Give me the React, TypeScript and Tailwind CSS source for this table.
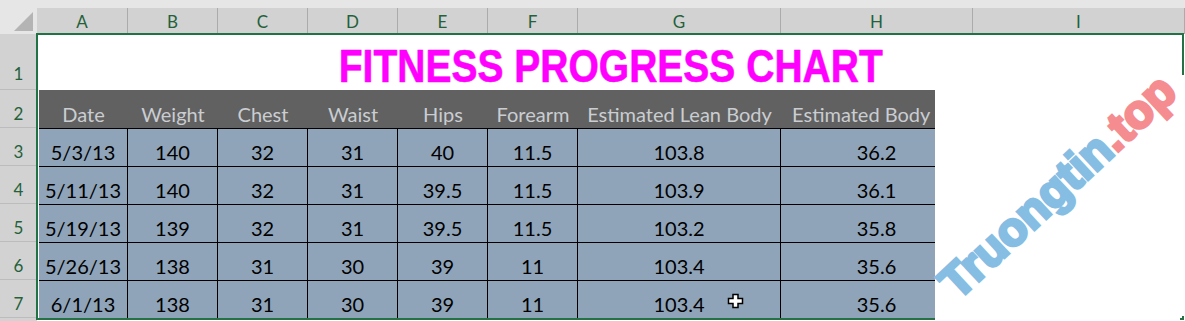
import React from 'react';

const cols = [
  { key: 'A', hdr: 'w-[91px]', cell: 'w-[89px]' },
  { key: 'B', hdr: 'w-[90px]', cell: 'w-[90px]' },
  { key: 'C', hdr: 'w-[90px]', cell: 'w-[90px]' },
  { key: 'D', hdr: 'w-[90px]', cell: 'w-[90px]' },
  { key: 'E', hdr: 'w-[90px]', cell: 'w-[90px]' },
  { key: 'F', hdr: 'w-[90px]', cell: 'w-[90px]' },
  { key: 'G', hdr: 'w-[203px]', cell: 'w-[203px]' },
  { key: 'H', hdr: 'w-[192px]', cell: 'w-[192px]' },
  { key: 'I', hdr: 'w-[212px]', cell: '' },
];

const headers = ['Date', 'Weight', 'Chest', 'Waist', 'Hips', 'Forearm', 'Estimated Lean Body', 'Estimated Body Fat'];

const rows = [
  ['5/3/13', '140', '32', '31', '40', '11.5', '103.8', '36.2'],
  ['5/11/13', '140', '32', '31', '39.5', '11.5', '103.9', '36.1'],
  ['5/19/13', '139', '32', '31', '39.5', '11.5', '103.2', '35.8'],
  ['5/26/13', '138', '31', '30', '39', '11', '103.4', '35.6'],
  ['6/1/13', '138', '31', '30', '39', '11', '103.4', '35.6'],
];

function RowNum({ n, tall }: { n: number | string; tall?: boolean }) {
  return (
    <div
      className={`flex items-end justify-center border-b border-[#bcbcbc] text-[17px] leading-[17px] text-[#24613a] ${
        tall ? 'h-[56px] pb-[7px]' : 'h-[38px] pb-[5px]'
      }`}
    >
      {n}
    </div>
  );
}

export default function App() {
  return (
    <div className="relative w-[1185px] h-[321px] overflow-hidden bg-white font-[Lato,sans-serif]">
      <div className="h-[8px] bg-[#e6e6e6]" />

      {/* column letters */}
      <div className="flex h-[26px] bg-[#d2d2d2]">
        <div className="w-[37px] shrink-0 bg-[#e6e6e6]">
          <svg width="37" height="26" viewBox="0 0 37 26">
            <polygon points="14,23 33,4 33,23" fill="#b4b4b4" />
          </svg>
        </div>
        {cols.map((c) => (
          <div
            key={c.key}
            className={`${c.hdr} shrink-0 flex items-end justify-center pb-[4px] border-r border-[#ababab] text-[17px] leading-[17px] text-[#24613a]`}
          >
            {c.key}
          </div>
        ))}
      </div>

      <div className="flex">
        <div className="w-[37px] shrink-0 flex flex-col bg-[#d2d2d2]">
          <RowNum n={1} tall />
          {[2, 3, 4, 5, 6, 7].map((n) => (
            <RowNum key={n} n={n} />
          ))}
          <div className="h-[10px]" />
        </div>

        <div className="flex-1 flex flex-col">
          <div className="h-[56px] flex items-end justify-center pb-[1px]">
            <span className="inline-block scale-x-83 font-['Liberation_Sans',Arial,sans-serif] font-bold text-[47px] leading-none text-[#ff00ff] whitespace-nowrap [-webkit-text-stroke:0.6px_#ff00ff]">
              FITNESS PROGRESS CHART
            </span>
          </div>

          <div className="ml-[2px] flex flex-col">
            <div className="flex h-[38px]">
              {headers.map((h, i) => (
                <div
                  key={h}
                  className={`${cols[i].cell} shrink-0 bg-[#616161] flex items-end justify-center pb-[4px] text-[20px] leading-[20px] text-[#cacdd1] whitespace-nowrap overflow-hidden`}
                >
                  {h}
                </div>
              ))}
            </div>
            {rows.map((r, ri) => (
              <div key={ri} className="flex h-[38px]">
                {r.map((v, i) => (
                  <div
                    key={i}
                    className={`${cols[i].cell} shrink-0 bg-[#8fa4b9] border-t border-r border-black flex items-end justify-center pb-[4px] text-[20px] leading-[20px] text-black`}
                  >
                    {v}
                  </div>
                ))}
              </div>
            ))}
          </div>
        </div>
      </div>

      {/* selection outline */}
      <div className="absolute left-[36px] top-[33px] w-[1148px] h-[287px] border-2 border-[#217346] pointer-events-none" />

      {/* watermark */}
      <div className="absolute left-[935px] top-[75px] w-[250px] h-[241px] bg-white" />
      <div className="absolute left-[935px] top-[316px] w-[245px] h-[5px] bg-white" />
      <div className="absolute left-[1057px] top-[186px] -translate-x-1/2 -translate-y-1/2 -rotate-[43deg] whitespace-nowrap font-['Liberation_Sans',Arial,sans-serif] font-bold text-[47px] leading-none">
        <span className="text-[#86bde3] [-webkit-text-stroke:3px_#86bde3]">Truongtin</span>
        <span className="text-[#f58c90] [-webkit-text-stroke:3px_#f58c90]">.top</span>
      </div>

      {/* cursor */}
      <svg className="absolute left-[727px] top-[293px]" width="17" height="16" viewBox="0 0 17 16">
        <path
          d="M6 1.5h5v4h4.5v5H11v4H6v-4H1.5v-5H6z"
          fill="#fff"
          stroke="#000"
          strokeWidth="1.5"
          strokeLinejoin="miter"
        />
      </svg>
    </div>
  );
}
